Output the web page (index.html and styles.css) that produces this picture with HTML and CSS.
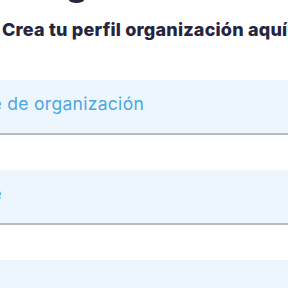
FILE: index.html
```html
<!DOCTYPE html>
<html lang="es">
<head>
<meta charset="utf-8">
<link rel="stylesheet" href="styles.css">
</head>
<body>
<div class="page">
  <div class="logo-tail"></div>
  <h1 class="title">Crea tu perfil organización aquí</h1>
  <form class="form">
    <input class="field" type="text" placeholder="Nombre de organización">
    <input class="field" type="text" placeholder="Nombre">
    <input class="field" type="text" placeholder="Usuario">
  </form>
</div>
</body>
</html>
```
FILE: styles.css
```css
html, body {
  margin: 0;
  padding: 0;
  background: #ffffff;
  overflow: hidden;
}
.page {
  width: 288px;
  height: 288px;
  overflow: hidden;
  font-family: "Inter", "Noto Sans", sans-serif;
}
.logo-tail {
  margin-left: 69px;
  width: 15px;
  height: 3px;
  background: #25253d;
  border-radius: 0 0 50% 50% / 0 0 100% 100%;
}
.title {
  margin: 16px 0 0 2px;
  font-size: 18px;
  line-height: 22px;
  font-weight: 800;
  letter-spacing: 0.2px;
  color: #25253f;
  white-space: nowrap;
}
.form {
  margin-top: 39px;
  display: flex;
  flex-direction: column;
  gap: 35px;
}
.field {
  display: block;
  margin-left: -82px;
  width: 420px;
  height: 55px;
  box-sizing: border-box;
  padding: 0 16px 6px 16px;
  border: none;
  border-bottom: 2px solid #b7bbbf;
  background: #eef6fd;
  font-family: "Inter", "Noto Sans", sans-serif;
  font-size: 17.5px;
  letter-spacing: 0.3px;
  color: #4ba6e6;
  outline: none;
}
.field::placeholder {
  color: #4ba6e6;
  opacity: 1;
}
```
